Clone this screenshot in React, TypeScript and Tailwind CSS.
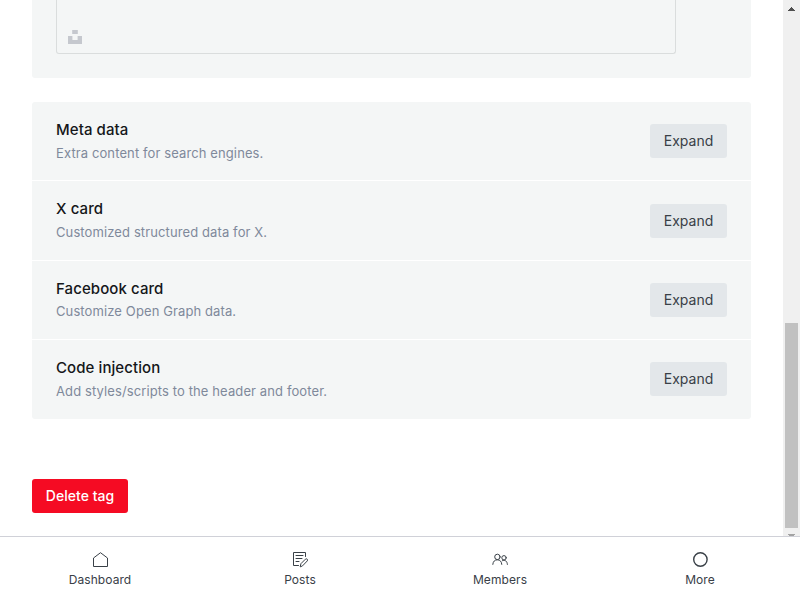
import React from "react";

type Section = {
  title: string;
  description: string;
  row: string;
  copy: string;
  gap: string;
  button: string;
};

const sections: Section[] = [
  { title: "Meta data", description: "Extra content for search engines.", row: "h-[79px] border-b", copy: "pt-[18px]", gap: "mt-1", button: "mt-[22px]" },
  { title: "X card", description: "Customized structured data for X.", row: "h-[80px] border-b", copy: "pt-[18px]", gap: "mt-1", button: "mt-[23px]" },
  { title: "Facebook card", description: "Customize Open Graph data.", row: "h-[79px] border-b", copy: "pt-[18px]", gap: "mt-[3px]", button: "mt-[22px]" },
  { title: "Code injection", description: "Add styles/scripts to the header and footer.", row: "h-[79px]", copy: "pt-[18px]", gap: "mt-1", button: "mt-[22px]" },
];

function HouseIcon() {
  return (
    <svg width="16" height="16" viewBox="0 0 16 16" fill="none" stroke="#394047" strokeWidth="1">
      <path d="M1.5 6 8.5.7l7 5.3v8.5h-14Z" strokeLinejoin="round" />
    </svg>
  );
}

function PostsIcon() {
  return (
    <svg width="16" height="16" viewBox="0 0 16 16" fill="none" stroke="#394047" strokeLinejoin="round" strokeLinecap="round">
      <path d="M6.5 13.5h-5v-13h12v4M4 3.5h7M4 6.5h6M4 9.5h3" />
      <path d="m8.3 14.5.6-2.8 4.5-4.5a1.2 1.2 0 0 1 1.8 1.8l-4.4 4.6Z" />
    </svg>
  );
}

function MembersIcon() {
  return (
    <svg width="16" height="16" viewBox="0 0 16 16" fill="none" stroke="#394047" strokeLinecap="round">
      <circle cx="5.4" cy="4.9" r="2.7" />
      <path d="M.8 12.4c.2-3 2-4.6 4.6-4.6s4.2 1.7 4.4 4.6" />
      <circle cx="12" cy="5.8" r="2.2" />
      <path d="M10.5 8.6c2.8-1 4.7.6 4.9 3.8" />
    </svg>
  );
}

function MoreIcon() {
  return (
    <svg width="16" height="16" viewBox="0 0 16 16" fill="none" stroke="#394047" strokeWidth="1.4">
      <circle cx="8.4" cy="7.5" r="6.7" />
    </svg>
  );
}

const tabs = [
  { label: "Dashboard", icon: <HouseIcon /> },
  { label: "Posts", icon: <PostsIcon /> },
  { label: "Members", icon: <MembersIcon /> },
  { label: "More", icon: <MoreIcon /> },
];

export default function App() {
  return (
    <div className="flex h-[600px] w-[800px] flex-col overflow-hidden bg-white font-['Inter',sans-serif]">
      <div className="flex h-[536px] shrink-0">
        <main className="w-[783px] shrink-0 pr-8 pl-8">
          <section className="h-[78px] rounded-b-[3px] bg-[#f4f6f6] px-6">
            <div className="flex h-[54px] w-[620px] items-end rounded-b-[3px] border border-t-0 border-[#dadddd] pb-[9px] pl-[11px]">
              <svg width="14" height="14" viewBox="0 0 14 14" fill="#c5c8ce">
                <path d="M4.2 0h5.6v4H4.2ZM0 6h4.4v4h5.2V6H14v8H0Z" />
              </svg>
            </div>
          </section>

          <section className="mt-6 overflow-hidden rounded-[3px] bg-[#f4f6f6]">
            {sections.map((s) => (
              <div key={s.title} className={`flex items-start justify-between border-white px-6 ${s.row}`}>
                <div className={s.copy}>
                  <h4 className="text-[15px] leading-5 font-[550] tracking-[0.08px] text-[#15171a]">{s.title}</h4>
                  <p className={`text-[13px] leading-[19px] tracking-[0.11px] text-[#7f899b] ${s.gap}`}>{s.description}</p>
                </div>
                <button className={`h-[34px] w-[77px] rounded-[3px] bg-[#e3e7ea] text-sm text-[#394047] ${s.button}`}>Expand</button>
              </div>
            ))}
          </section>

          <button className="mt-[60px] block h-[34px] w-24 rounded-[3px] bg-[#f50b23] text-sm font-medium tracking-[0.04px] whitespace-nowrap text-white">
            Delete tag
          </button>
        </main>

        <div className="flex w-[17px] flex-col items-center bg-[#f0f0f0]">
          <svg className="mt-[7px] shrink-0" width="7" height="4" viewBox="0 0 7 4" fill="#505050" shapeRendering="crispEdges">
            <path d="M3 0h1v1h1v1h1v1h1v1H0V3h1V2h1V1h1Z" />
          </svg>
          <div className="mt-[312px] h-[205px] w-[13px] shrink-0 bg-[#c1c1c1]" />
          <svg className="mt-[6px] shrink-0" width="7" height="2" viewBox="0 0 7 2" fill="#a3a3a3" shapeRendering="crispEdges">
            <path d="M0 0h7v1H6v1H1V1H0Z" />
          </svg>
        </div>
      </div>

      <nav className="grid h-16 shrink-0 grid-cols-4 border-t border-[#d0d1d8] bg-white">
        {tabs.map((t) => (
          <div key={t.label} className="flex flex-col items-center pt-[15px] text-xs leading-4 tracking-[0.08px] text-[#394047]">
            {t.icon}
            <span className="mt-1">{t.label}</span>
          </div>
        ))}
      </nav>
    </div>
  );
}
